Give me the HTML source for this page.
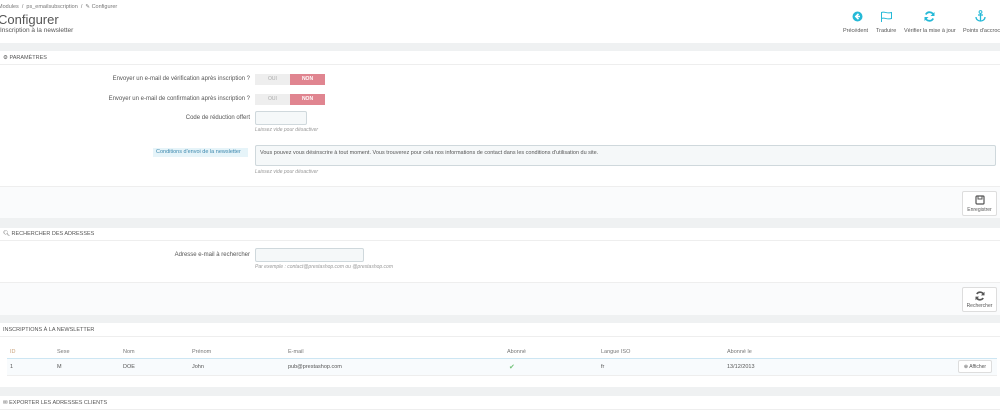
<!DOCTYPE html><html><head><meta charset="utf-8"><style>
*{margin:0;padding:0;box-sizing:border-box}
body{width:1000px;height:413px;overflow:hidden;background:#eff1f2;font-family:"Liberation Sans",sans-serif;color:#555;font-size:6px;position:relative}
.a{position:absolute;white-space:nowrap}
.w{position:absolute;left:0;width:1000px;background:#fff}
.ft{position:absolute;left:0;width:1000px;background:#fafbfc;border-top:1px solid #eee}
.hd{position:absolute;left:0;width:1000px;border-bottom:1px solid #eee;font-size:5.5px;color:#555;padding-left:3px}
.lbl{position:absolute;text-align:right;width:250px;left:0;font-size:6px;color:#555}
.in{position:absolute;background:#f5f8f9;border:1px solid #cfd8dc;border-radius:2px}
.hint{position:absolute;font-size:5px;font-style:italic;color:#999}
.btn{position:absolute;background:#fff;border:1px solid #ddd;border-radius:2px;text-align:center;font-size:5px;color:#555}
.tg{position:absolute;left:255px;width:70px;height:11px;font-size:5px}
.tg span{display:inline-block;width:35px;height:11px;line-height:11px;text-align:center;float:left}
.tg .o{background:#eee;color:#aaa}.tg .n{background:#e08590;color:#fff;font-weight:bold}
.tb{position:absolute;top:28px;font-size:5.5px;color:#555;text-align:center;white-space:nowrap}
.th{position:absolute;top:349px;font-size:5.5px;color:#777}
.td{position:absolute;top:364px;font-size:5.5px;color:#555}
</style></head><body>
<div class="w" style="top:0;height:43px"></div>
<div class="a" style="left:-2px;top:4px;font-size:5.5px;color:#777">Modules &nbsp;/ &nbsp;ps_emailsubscription &nbsp;/ &nbsp;✎ Configurer</div>
<div class="a" style="left:-2px;top:12px;font-size:13px;color:#555">Configurer</div>
<div class="a" style="left:0;top:27px;font-size:6.5px;color:#555">Inscription à la newsletter</div>
<svg class="a" style="left:852px;top:11px" width="11" height="11"><circle cx="5.5" cy="5.5" r="5" fill="#25b9d7"/><path d="M6.5 2.8L3.8 5.5 6.5 8.2M3.8 5.5H8" stroke="#fff" stroke-width="1.6" fill="none"/></svg>
<svg class="a" style="left:880px;top:11px" width="13" height="11"><path d="M1.5 1v10M1.5 1.5c3-1.5 5 1.5 10 0v6c-5 1.5-7-1.5-10 0" stroke="#25b9d7" fill="none"/></svg>
<svg class="a" style="left:924px;top:11px" width="11" height="11"><path d="M9.5 4A4.2 4.2 0 0 0 1.8 3.5M1.5 7a4.2 4.2 0 0 0 7.7.5" stroke="#25b9d7" stroke-width="1.8" fill="none"/><path d="M10.5 1v4H6.5zM.5 10V6h4z" fill="#25b9d7"/></svg>
<svg class="a" style="left:975px;top:10px" width="11" height="12"><circle cx="5.5" cy="2" r="1.4" stroke="#25b9d7" fill="none"/><path d="M5.5 3.5v7.5M3 5h5M1 7c0 3 3 4 4.5 4s4.5-1 4.5-4" stroke="#25b9d7" stroke-width="1.3" fill="none"/></svg>
<div class="tb" style="left:843px">Précédent</div>
<div class="tb" style="left:876px">Traduire</div>
<div class="tb" style="left:904px">Vérifier la mise à jour</div>
<div class="tb" style="left:963px">Points d'accroc</div>

<div class="w" style="top:51px;height:167px"></div>
<div class="hd" style="top:51px;height:14px;line-height:14px">⚙ PARAMÈTRES</div>
<div class="lbl" style="top:76px">Envoyer un e-mail de vérification après inscription ?</div>
<div class="tg" style="top:74px"><span class="o">OUI</span><span class="n">NON</span></div>
<div class="lbl" style="top:96px">Envoyer un e-mail de confirmation après inscription ?</div>
<div class="tg" style="top:94px"><span class="o">OUI</span><span class="n">NON</span></div>
<div class="lbl" style="top:115px">Code de réduction offert</div>
<div class="in" style="left:255px;top:111px;width:52px;height:14px"></div>
<div class="hint" style="left:255px;top:127px">Laissez vide pour désactiver</div>
<div class="a" style="left:153px;top:148px;width:95px;height:9px;background:#e6f4f9;color:#3a87ad;font-size:5.5px;line-height:9px;padding-left:3px">Conditions d'envoi de la newsletter</div>
<div class="in" style="left:255px;top:145px;width:741px;height:21px;font-size:5.5px;padding:4px 4px">Vous pouvez vous désinscrire à tout moment. Vous trouverez pour cela nos informations de contact dans les conditions d'utilisation du site.</div>
<div class="hint" style="left:255px;top:169px">Laissez vide pour désactiver</div>
<div class="ft" style="top:186px;height:32px"></div>
<div class="btn" style="left:962px;top:191px;width:35px;height:25px;padding-top:3px"><svg width="10" height="10"><rect x="1" y="1" width="8" height="8" rx="1" stroke="#555" fill="none" stroke-width="1.2"/><rect x="3" y="1" width="4" height="3" stroke="#555" fill="none"/></svg><br>Enregistrer</div>

<div class="w" style="top:228px;height:87px"></div>
<div class="hd" style="top:228px;height:13px;line-height:13px">🔍︎ RECHERCHER DES ADRESSES</div>
<div class="lbl" style="top:252px">Adresse e-mail à rechercher</div>
<div class="in" style="left:255px;top:248px;width:109px;height:14px"></div>
<div class="hint" style="left:255px;top:264px">Par exemple : contact@prestashop.com ou @prestashop.com</div>
<div class="ft" style="top:282px;height:33px"></div>
<div class="btn" style="left:962px;top:287px;width:35px;height:25px;padding-top:3px"><svg width="10" height="10"><path d="M8.5 3.5A3.8 3.8 0 0 0 1.8 3M1.5 6.5a3.8 3.8 0 0 0 6.7.5" stroke="#555" stroke-width="1.6" fill="none"/><path d="M9.5 .8v3.6H5.9zM.5 9.2V5.6h3.6z" fill="#555"/></svg><br>Rechercher</div>

<div class="w" style="top:323px;height:64px"></div>
<div class="hd" style="top:323px;height:14px;line-height:14px">INSCRIPTIONS À LA NEWSLETTER</div>
<div class="th" style="left:10px;color:#c9a07a">ID</div><div class="th" style="left:57px">Sexe</div><div class="th" style="left:123px">Nom</div><div class="th" style="left:192px">Prénom</div><div class="th" style="left:288px">E-mail</div><div class="th" style="left:507px">Abonné</div><div class="th" style="left:601px">Langue ISO</div><div class="th" style="left:727px">Abonné le</div>
<div class="a" style="left:7px;top:358px;width:990px;height:18px;background:#f8fbfd;border-top:1px solid #cde6f3;border-bottom:1px solid #eee"></div>
<div class="td" style="left:10px">1</div><div class="td" style="left:57px">M</div><div class="td" style="left:123px">DOE</div><div class="td" style="left:192px">John</div><div class="td" style="left:288px">pub@prestashop.com</div><div class="td" style="left:509px;color:#72c279;font-size:7px;top:363px">✔</div><div class="td" style="left:601px">fr</div><div class="td" style="left:727px">13/12/2013</div>
<div class="btn" style="left:958px;top:360px;width:34px;height:13px;line-height:12px">⊕ Afficher</div>

<div class="w" style="top:396px;height:17px"></div>
<div class="hd" style="top:396px;height:14px;line-height:14px">✉ EXPORTER LES ADRESSES CLIENTS</div>
</body></html>
